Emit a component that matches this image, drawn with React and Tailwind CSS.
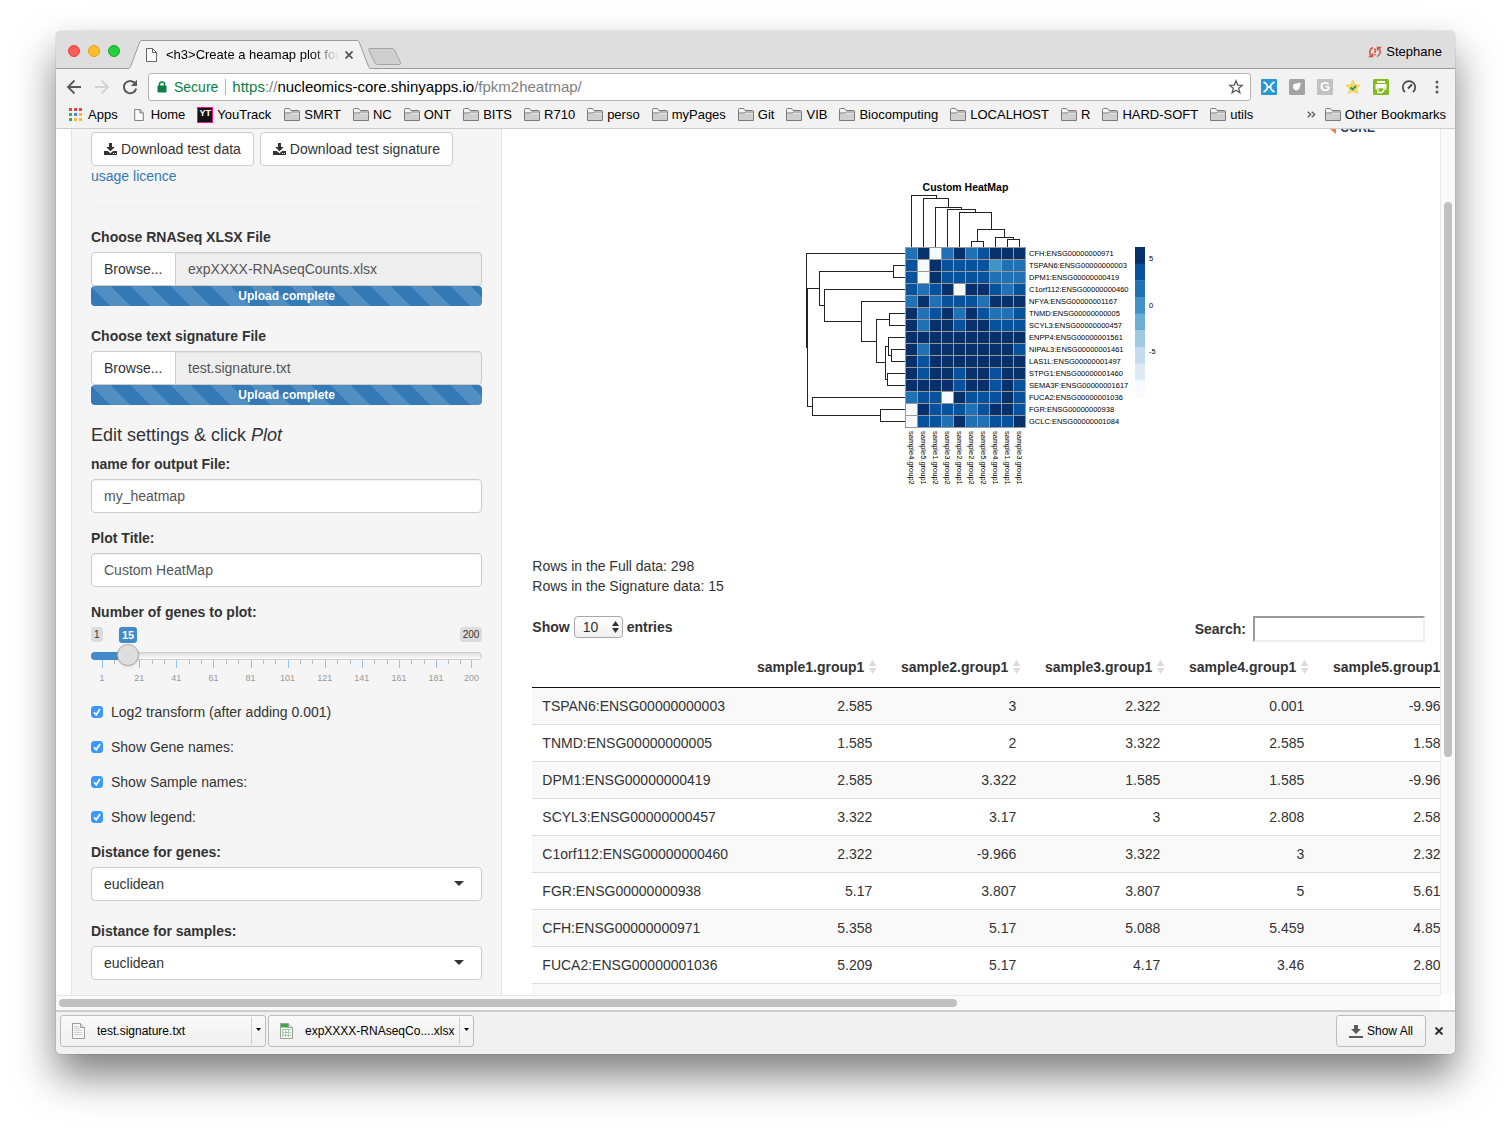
import React from "react";

const folders = ["SMRT", "NC", "ONT", "BITS", "R710", "perso", "myPages", "Git", "VIB", "Biocomputing", "LOCALHOST", "R", "HARD-SOFT", "utils"];

const columns = ["sample1.group1", "sample2.group1", "sample3.group1", "sample4.group1", "sample5.group1"];
const rows = [
  ["TSPAN6:ENSG00000000003", "2.585", "3", "2.322", "0.001", "-9.966"],
  ["TNMD:ENSG00000000005", "1.585", "2", "3.322", "2.585", "1.585"],
  ["DPM1:ENSG00000000419", "2.585", "3.322", "1.585", "1.585", "-9.966"],
  ["SCYL3:ENSG00000000457", "3.322", "3.17", "3", "2.808", "2.585"],
  ["C1orf112:ENSG00000000460", "2.322", "-9.966", "3.322", "3", "2.322"],
  ["FGR:ENSG00000000938", "5.17", "3.807", "3.807", "5", "5.615"],
  ["CFH:ENSG00000000971", "5.358", "5.17", "5.088", "5.459", "4.858"],
  ["FUCA2:ENSG00000001036", "5.209", "5.17", "4.17", "3.46", "2.807"],
  ["", "", "", "", "", ""],
];

const shades = { D: "#08306b", M: "#08519c", B: "#2171b5", L: "#4292c6", W: "#f7fbff" };
const heat = [
  ["CFH:ENSG00000000971", "BDWBDBMDDD"],
  ["TSPAN6:ENSG00000000003", "MWDMMMMLBB"],
  ["DPM1:ENSG00000000419", "MWDMMMMBBB"],
  ["C1orf112:ENSG00000000460", "MBMDWDDMBM"],
  ["NFYA:ENSG00000001167", "BDBMMMBDDD"],
  ["TNMD:ENSG00000000005", "DBMDBDMBBM"],
  ["SCYL3:ENSG00000000457", "DBDDMDDMMM"],
  ["ENPP4:ENSG00000001561", "DDDDDDDDDD"],
  ["NIPAL3:ENSG00000001461", "DBDDDDDDDM"],
  ["LAS1L:ENSG00000001497", "DMDDDDDDDD"],
  ["STPG1:ENSG00000001460", "DMDDMDDMDD"],
  ["SEMA3F:ENSG00000001617", "DDDDMDDMDM"],
  ["FUCA2:ENSG00000001036", "BMMWDMMMDM"],
  ["FGR:ENSG00000000938", "WDMMMBMDDM"],
  ["GCLC:ENSG00000001084", "WMMBDBBMMD"],
];
const samples = ["sample4.group2", "sample5.group1", "sample1.group2", "sample3.group2", "sample2.group1", "sample2.group2", "sample5.group2", "sample4.group1", "sample1.group1", "sample3.group1"];
const legend = ["#08306b", "#08519c", "#2171b5", "#4292c6", "#6baed6", "#9ecae1", "#c6dbef", "#deebf7", "#f7fbff"];

const columnTree =
  "M223 134V31H273V37M247 134V37H297V55M271 134V55H323V59M295 134V59H351V65M319 134V65H383V99M355 123V99H409V115M343 134V123H367V134M391 134V115H427V119M415 134V119H439V134";
const rowTree =
  "M212 147H13V335H15M39 217H15V453H25M187 183H39V251H49M212 171H187V195H212M212 219H49V283H123M212 243H123V323H153M179 279H153V365H171M212 267H179V291H212M177 333H171V399H175M212 315H177V351H183M212 339H183V363H212M212 387H175V411H212M212 435H25V471H161M212 459H161V483H212";

function HeatMap() {
  return (
    <svg viewBox="0 0 720 620" className="w-[360px] font-['Liberation_Sans',Arial,sans-serif]" role="img" aria-label="Custom HeatMap">
      <text x="331" y="22" fontSize="21" fontWeight="700" textAnchor="middle">Custom HeatMap</text>
      <g fill="none" stroke="#222" strokeWidth="2" shapeRendering="crispEdges">
        <path d={columnTree} />
        <path d={rowTree} />
      </g>
      <g stroke="#999" strokeWidth="2" shapeRendering="crispEdges">
        {heat.map(([name, cells], r) =>
          [...cells].map((c, i) => <rect key={name + i} x={211 + i * 24} y={135 + r * 24} width="24" height="24" fill={shades[c]} />)
        )}
      </g>
      <g fontSize="15" fill="#000">
        {heat.map(([name], r) => <text key={name} x="458" y={152 + r * 24}>{name}</text>)}
        {samples.map((s, i) => <text key={s} transform={`translate(${218 + i * 24} 502) rotate(90)`}>{s}</text>)}
        <text x="698" y="162">5</text>
        <text x="698" y="256">0</text>
        <text x="698" y="348">-5</text>
      </g>
      {legend.map((c, i) => <rect key={c} x="670" y={134 + (i * 100) / 3} width="20" height="34" fill={c} />)}
    </svg>
  );
}

function FolderIcon() {
  return (
    <svg width="16" height="13" viewBox="0 0 16 13" className="shrink-0" aria-hidden="true">
      <path d="M.5 12.5V1.500Q.5.5 1.500.5H5.500L7 2.500H14.500Q15.500 2.500 15.500 3.500V12.500Z" fill="#f4f4f4" stroke="#7a7a7a" />
      <path d="M1 12V5.500H15V12Z" fill="#cfcfcf" />
      <path d="M.5 5H6L7.500 4H15.500" fill="none" stroke="#7a7a7a" />
    </svg>
  );
}

function PageIcon({ className }) {
  return (
    <svg viewBox="0 0 11 14" className={className} fill="#fafafa" stroke="#666" aria-hidden="true">
      <path d="M.5.5H6.500L10.500 4.500V13.500H.5Z" />
      <path d="M6.500.5V4.500H10.500" fill="none" />
    </svg>
  );
}

function AppsIcon() {
  const colors = ["#e8453c", "#e8453c", "#e8453c", "#3aa757", "#4688f1", "#f9bb2d", "#3aa757", "#f9bb2d", "#f9bb2d"];
  return (
    <svg width="13" height="13" viewBox="0 0 13 13" aria-hidden="true">
      {colors.map((c, i) => <rect key={i} x={(i % 3) * 5} y={Math.floor(i / 3) * 5} width="3" height="3" fill={c} />)}
    </svg>
  );
}

function TabStrip() {
  return (
    <header className="flex h-[38px] shrink-0 items-end border-b border-[#9b9b9b] bg-[#dedede]">
      <div className="flex h-full w-[72px] items-center gap-2 pb-px pl-3 pt-1">
        <button aria-label="Close window" className="size-3 rounded-full border border-[#e2463f] bg-[#fc5b57]" />
        <button aria-label="Minimise window" className="size-3 rounded-full border border-[#e1a116] bg-[#fdbe2e]" />
        <button aria-label="Zoom window" className="size-3 rounded-full border border-[#12ac28] bg-[#28cc40]" />
      </div>
      <div className="-mb-px flex h-[29px] items-stretch">
        <svg width="14" height="29" viewBox="0 0 14 29" aria-hidden="true">
          <path d="M0 28.500C1.500 28.500 2 27.500 2.500 26.500L12 1.500Q12.400.5 14 .5V29H0Z" fill="#f2f2f2" />
          <path d="M0 28.500C1.500 28.500 2 27.500 2.500 26.500L12 1.500Q12.400.5 14 .5" fill="none" stroke="#9b9b9b" />
        </svg>
        <div className="flex w-[215px] items-center border-t border-[#9b9b9b] bg-[#f2f2f2] pl-1">
          <PageIcon className="mr-[9px] h-3.5 w-[11px] shrink-0" />
          <span className="w-[172px] overflow-hidden whitespace-nowrap text-[13px] mask-r-from-85%">&lt;h3&gt;Create a heamap plot for</span>
          <button aria-label="Close tab" className="ml-[7px]">
            <svg width="8" height="8" viewBox="0 0 8 8" stroke="#555" strokeWidth="1.800"><path d="M.5.5L7.500 7.500M7.500.5L.5 7.500" /></svg>
          </button>
        </div>
        <svg width="14" height="29" viewBox="0 0 14 29" aria-hidden="true">
          <path d="M14 28.500C12.500 28.500 12 27.500 11.500 26.500L2 1.500Q1.600.5 0 .5V29H14Z" fill="#f2f2f2" />
          <path d="M14 28.500C12.500 28.500 12 27.500 11.500 26.500L2 1.500Q1.600.5 0 .5" fill="none" stroke="#9b9b9b" />
        </svg>
      </div>
      <button aria-label="New tab" className="mb-[3px] -ml-[3px]">
        <svg width="34" height="17" viewBox="0 0 34 17"><path d="M1.500.5H24Q26 .5 26.800 2.500L32.500 14.500Q33.200 16.500 31.500 16.500H9.500Q7.500 16.500 6.700 14.500L.8 2Q.3.5 1.500.5Z" fill="#cfcfcf" stroke="#a3a3a3" /></svg>
      </button>
      <button className="mb-2 ml-auto mr-[13px] flex items-center gap-1 text-[13px] leading-4">
        <svg width="14" height="12" viewBox="0 0 14 12" fill="none" stroke="#cf5241" strokeWidth="1.500" aria-hidden="true">
          <path d="M5 1.500A5 5 0 0 0 3.500 10M.8 10.500H4.500V7.300M9 10.500A5 5 0 0 0 10.500 2M13.200 1.500H9.500V4.700" />
          <path d="M7 2.500V7M7 8V9.500" />
        </svg>
        Stephane
      </button>
    </header>
  );
}

function Toolbar() {
  return (
    <div className="flex shrink-0 items-center bg-[#f2f2f2] pb-[3px] pl-[10px] pt-1">
      <div className="flex w-[82px] shrink-0 items-center gap-3">
        <button aria-label="Back">
          <svg width="16" height="16" viewBox="0 0 16 16" fill="none" stroke="#5a5a5a" strokeWidth="1.800"><path d="M15 8H2M8.500 1.500L2 8L8.500 14.500" /></svg>
        </button>
        <button aria-label="Forward">
          <svg width="16" height="16" viewBox="0 0 16 16" fill="none" stroke="#d2d2d2" strokeWidth="1.800"><path d="M1 8H14M7.500 1.500L14 8L7.500 14.500" /></svg>
        </button>
        <button aria-label="Reload">
          <svg width="16" height="16" viewBox="0 0 16 16"><path d="M13 4.200A6.200 6.200 0 1 0 14.200 9.500" fill="none" stroke="#5a5a5a" strokeWidth="2" /><path d="M15 .8V7H8.800Z" fill="#5a5a5a" /></svg>
        </button>
      </div>
      <div className="flex h-7 min-w-0 flex-1 items-center rounded-[3px] border border-[#b4b4b4] bg-white pl-2 pr-[6px]">
        <svg width="10" height="12" viewBox="0 0 10 12" className="mr-[7px]" aria-hidden="true">
          <path d="M2.500 5V3.200A2.500 2.300 0 0 1 7.500 3.200V5" fill="none" stroke="#0b8043" strokeWidth="1.500" /><rect x=".5" y="4.500" width="9" height="7" rx=".8" fill="#0b8043" />
        </svg>
        <span className="mr-[6px] border-r border-[#b5b5b5] pr-[7px] text-[14px] leading-4 text-[#0b8043]">Secure</span>
        <div role="textbox" aria-label="Address" tabIndex={0} className="flex-1 whitespace-nowrap text-[15px] leading-5 text-black">
          <span className="text-[#0b8043]">https</span><span className="text-[#808080]">://</span>nucleomics-core.shinyapps.io<span className="text-[#808080]">/fpkm2heatmap/</span>
        </div>
        <button aria-label="Bookmark this page">
          <svg width="16" height="16" viewBox="0 0 16 16" fill="none" stroke="#5a5a5a" strokeWidth="1.300"><path d="M8 1.800L9.700 6.100L14.300 6.400L10.700 9.300L11.900 13.800L8 11.300L4.100 13.800L5.300 9.300L1.700 6.400L6.300 6.100Z" /></svg>
        </button>
      </div>
      <div className="flex shrink-0 items-center gap-3 pl-[10px] pr-[10px]">
        <button aria-label="Xmarks">
          <svg width="16" height="16" viewBox="0 0 16 16"><rect width="16" height="16" rx="1" fill="#2a97d4" /><path d="M2.500 3Q6.500 5 6.500 8Q6.500 11 2.500 13M13.500 3Q9.500 5 9.500 8Q9.500 11 13.500 13" fill="none" stroke="#fff" strokeWidth="1.800" /><path d="M6 8H10" stroke="#fff" strokeWidth="2" /></svg>
        </button>
        <button aria-label="Extension">
          <svg width="16" height="16" viewBox="0 0 16 16"><rect width="16" height="16" rx="1.500" fill="#a3a3a3" /><path d="M4 7Q4 4.500 7 4.500L11.500 3.500Q11.500 9 9 11Q7 12 5 10.500Q4 9 4 7Z" fill="#fff" /></svg>
        </button>
        <button aria-label="Google" className="size-4 rounded-[1px] bg-[#c2c2c2] text-center text-[13px] font-bold leading-4 text-white">G</button>
        <button aria-label="Starred">
          <svg width="16" height="16" viewBox="0 0 16 16"><path d="M8 1L10.200 5.700L15.300 6.300L11.500 9.800L12.600 14.800L8 12.300L3.400 14.800L4.500 9.800L.7 6.300L5.800 5.700Z" fill="#fdd85b" stroke="#f7c84a" strokeWidth=".6" /><path d="M5.500 8.500L7.500 10.500L11 7" fill="none" stroke="#219a5b" strokeWidth="1.800" /></svg>
        </button>
        <button aria-label="Print friendly">
          <svg width="16" height="16" viewBox="0 0 16 16"><rect width="16" height="16" rx="1.500" fill="#83b81f" /><path d="M4 2H12V4H4ZM2.500 5H13.500V10.500H12V8H4V10.500H2.500Z" fill="#fff" /><path d="M5 8.500H11V11L9 13.500H5Z" fill="#83b81f" stroke="#fff" strokeWidth="1.300" /></svg>
        </button>
        <button aria-label="Speed">
          <svg width="16" height="16" viewBox="0 0 16 16" fill="none" stroke="#484848" strokeWidth="1.700"><path d="M4 13A6.200 6.200 0 1 1 12 13" /><path d="M7 9.500L11 5.500" strokeWidth="2" /></svg>
        </button>
        <button aria-label="Menu">
          <svg width="16" height="16" viewBox="0 0 16 16" fill="#5a5a5a"><circle cx="8" cy="3" r="1.500" /><circle cx="8" cy="8" r="1.500" /><circle cx="8" cy="13" r="1.500" /></svg>
        </button>
      </div>
    </div>
  );
}

function Bookmarks() {
  const item = "flex shrink-0 items-center gap-1 text-black";
  return (
    <nav aria-label="Bookmarks" className="flex h-[25px] shrink-0 items-center whitespace-nowrap border-b border-[#cdcdcd] bg-[#f2f2f2] pb-[3px] pl-[13px] pr-[9px] text-[13px] leading-4">
      <a href="#apps" className={item}><AppsIcon /><span className="pl-[2px]">Apps</span></a>
      <a href="#home" className={item + " ml-4"}><PageIcon className="h-3 w-[10px]" /><span className="pl-[3px]">Home</span></a>
      <a href="#youtrack" className={item + " ml-3"}>
        <span className="size-4 border border-[#f0148c] bg-[#151515] text-center text-[9px] font-bold leading-[10px] text-white">YT</span>YouTrack
      </a>
      <div className="flex min-w-0 flex-1 gap-3 overflow-hidden pl-[13px]">
        {folders.map((f) => <a key={f} href={"#" + f} className={item}><FolderIcon />{f}</a>)}
      </div>
      <button aria-label="More bookmarks" className="mr-[9px]">
        <svg width="9" height="7" viewBox="0 0 9 7" fill="none" stroke="#5a5a5a" strokeWidth="1.300"><path d="M.7.7L3.700 3.500L.7 6.300M4.700.7L7.700 3.500L4.700 6.300" /></svg>
      </button>
      <a href="#other" className={item}><FolderIcon />Other Bookmarks</a>
    </nav>
  );
}

function DownloadIcon() {
  return (
    <svg width="13" height="12" viewBox="0 0 13 12" fill="#333" aria-hidden="true">
      <path d="M5 0H8V4H10.800L6.500 8.300L2.200 4H5Z" />
      <path d="M0 8H3.800L6.500 10.300L9.200 8H13V12H0Z" />
      <path d="M9 10h1v1h-1zM11 10h1v1h-1z" fill="#fff" />
    </svg>
  );
}

function FileField({ id, label, file }) {
  return (
    <div className="mb-5">
      <label htmlFor={id} className="mb-[5px] block font-bold">{label}</label>
      <div className="flex h-[34px]">
        <label className="flex w-[85px] shrink-0 items-center rounded-l border border-[#ccc] bg-white px-3">
          Browse...
          <input id={id} type="file" className="sr-only" />
        </label>
        <input readOnly aria-label={label + " name"} value={file} className="min-w-0 flex-1 rounded-r border border-l-0 border-[#ccc] bg-[#eee] px-3 text-[#555] inset-shadow-2xs" />
      </div>
      <div role="progressbar" aria-valuenow={100} aria-label={label} className="h-5 rounded bg-[#337ab7] bg-[linear-gradient(45deg,rgba(255,255,255,.15)_25%,transparent_25%,transparent_50%,rgba(255,255,255,.15)_50%,rgba(255,255,255,.15)_75%,transparent_75%,transparent)] bg-size-[40px_40px] text-center text-xs font-bold leading-5 text-white">
        Upload complete
      </div>
    </div>
  );
}

function TextField({ id, label, value }) {
  return (
    <div className="mb-[15px]">
      <label htmlFor={id} className="mb-[5px] block font-bold">{label}</label>
      <input id={id} defaultValue={value} className="h-[34px] w-full rounded border border-[#ccc] bg-white px-3 text-[#555] inset-shadow-2xs" />
    </div>
  );
}

function SelectField({ id, label }) {
  return (
    <div className="mb-5">
      <label htmlFor={id} className="mb-[5px] block font-bold">{label}</label>
      <div className="relative">
        <select id={id} className="h-[34px] w-full appearance-none rounded border border-[#ccc] bg-white px-3">
          <option>euclidean</option>
        </select>
        <svg width="10" height="5" viewBox="0 0 10 5" className="pointer-events-none absolute right-[18px] top-[14px]" aria-hidden="true"><path d="M0 0H10L5 5Z" fill="#333" /></svg>
      </div>
    </div>
  );
}

function CheckField({ label }) {
  return (
    <label className="flex items-center gap-2">
      <span className="relative flex size-3">
        <input type="checkbox" defaultChecked className="peer size-3 appearance-none rounded-[3px] border border-[#aaa] bg-white checked:border-[#3b99fc] checked:bg-[#3b99fc]" />
        <svg viewBox="0 0 12 12" className="pointer-events-none absolute inset-0 hidden peer-checked:block" fill="none" stroke="#fff" strokeWidth="1.700" aria-hidden="true"><path d="M3 6.300L5.200 8.800L9 3" /></svg>
      </span>
      {label}
    </label>
  );
}

const ticks = [1, 21, 41, 61, 81, 101, 121, 141, 161, 181];

function GeneSlider() {
  return (
    <div className="h-[75px]">
      <label htmlFor="genes" className="mb-[5px] block font-bold">Number of genes to plot:</label>
      <div className="relative flex items-center justify-between text-[10px] leading-[15px]">
        <span className="rounded-[3px] bg-[#dcdcdc] px-[3px]">1</span>
        <span className="absolute left-7 top-0 rounded-[3px] bg-[#428bca] px-[3px] text-[11px] font-bold leading-4 text-white">15</span>
        <span className="rounded-[3px] bg-[#dcdcdc] px-[3px]">200</span>
      </div>
      <div className="relative mt-[10px] h-2 rounded-full border border-[#ccc] bg-linear-to-b from-[#dedede] to-white">
        <div className="-my-px -ml-px h-2 w-[36px] rounded-l-full bg-[#428bca]" />
        <input
          id="genes" type="range" min="1" max="200" defaultValue="15"
          className="absolute -left-px -top-[9px] h-[22px] w-[calc(100%+2px)] appearance-none bg-transparent [&::-webkit-slider-thumb]:size-[22px] [&::-webkit-slider-thumb]:appearance-none [&::-webkit-slider-thumb]:rounded-full [&::-webkit-slider-thumb]:border [&::-webkit-slider-thumb]:border-[#aaa] [&::-webkit-slider-thumb]:bg-[#dedede] [&::-webkit-slider-thumb]:shadow"
        />
      </div>
      <div className="flex px-[11px] text-[9px] leading-[10px] text-[#999]" aria-hidden="true">
        {ticks.map((t) => (
          <div key={t} className="min-w-0" style={{ flex: t === 181 ? 19 : 20 }}>
            <div className="flex h-2 *:flex-1 *:border-l">
              <i className="h-2 border-[#9cc0e0]" />
              <i className="h-1 border-[#bbb]" />
              <i className="h-1 border-[#bbb]" />
            </div>
            <div className="mt-[5px] flex w-0 justify-center"><span>{t}</span></div>
          </div>
        ))}
        <div className="w-0">
          <div className="h-2 w-px bg-[#9cc0e0]" />
          <div className="mt-[5px] flex w-0 justify-center"><span>200</span></div>
        </div>
      </div>
    </div>
  );
}

function Sidebar() {
  const button = "flex h-[34px] items-center gap-1 rounded border border-[#ccc] bg-white px-3";
  return (
    <aside className="w-1/3 shrink-0 px-[15px]">
      <form className="h-full border-x border-[#e3e3e3] bg-[#f5f5f5] px-[19px] pt-[3px]">
        <div className="flex gap-[6px] whitespace-nowrap">
          <button type="button" className={button}><DownloadIcon />Download test data</button>
          <button type="button" className={button}><DownloadIcon />Download test signature</button>
        </div>
        <a href="#licence" className="text-[#337ab7]">usage licence</a>
        <hr className="my-5 border-[#eee]" />
        <FileField id="xlsx" label="Choose RNASeq XLSX File" file="expXXXX-RNAseqCounts.xlsx" />
        <FileField id="signature" label="Choose text signature File" file="test.signature.txt" />
        <h4 className="mb-[9px] text-lg leading-5">Edit settings &amp; click <em>Plot</em></h4>
        <TextField id="outfile" label="name for output File:" value="my_heatmap" />
        <TextField id="title" label="Plot Title:" value="Custom HeatMap" />
        <GeneSlider />
        <div className="mb-[15px] mt-[25px] flex flex-col gap-[15px]">
          <CheckField label="Log2 transform (after adding 0.001)" />
          <CheckField label="Show Gene names:" />
          <CheckField label="Show Sample names:" />
          <CheckField label="Show legend:" />
        </div>
        <SelectField id="dist-genes" label="Distance for genes:" />
        <SelectField id="dist-samples" label="Distance for samples:" />
      </form>
    </aside>
  );
}

function DataTable() {
  return (
    <table className="mt-[5px] w-[926px] table-fixed border-separate border-spacing-0">
      <thead>
        <tr>
          <th className="w-[206px] border-b border-[#111]"><span className="sr-only">Gene</span></th>
          {columns.map((c) => (
            <th key={c} className="h-[41px] w-36 border-b border-[#111] p-0">
              <button className="flex w-full items-center justify-end gap-1 pr-[5px] font-bold">
                {c}
                <svg width="9" height="14" viewBox="0 0 9 14" fill="#dcdcdc" aria-hidden="true"><path d="M4.500 0L8.500 6H.5ZM4.500 14L8.500 8H.5Z" /></svg>
              </button>
            </th>
          ))}
        </tr>
      </thead>
      <tbody className="[&>tr:not(:first-child)>td]:border-t [&>tr:nth-child(odd)]:bg-[#f9f9f9]">
        {rows.map((r, i) => (
          <tr key={i} className={i ? "h-[37px]" : "h-9"}>
            {r.map((v, j) => (
              <td key={j} className={"border-[#ddd] px-[10px] py-0 " + (j ? "text-right" : "text-left")}>{v}</td>
            ))}
          </tr>
        ))}
      </tbody>
    </table>
  );
}

function MainPanel() {
  return (
    <main className="w-2/3 shrink-0 px-[15px]">
      <div className="flex h-[6px] items-end justify-end gap-1 overflow-hidden pr-[50px] text-xs font-bold leading-[14px] text-[#2c3e5c]">
        <svg width="6" height="6" viewBox="0 0 6 6" aria-hidden="true"><path d="M0 0H6V5Z" fill="#f47a3c" /></svg>
        <span>CORE</span>
      </div>
      <div className="mt-[45px] flex justify-center pl-[2px]"><HeatMap /></div>
      <p className="mt-[66px]">Rows in the Full data: 298</p>
      <p>Rows in the Signature data: 15</p>
      <div className="mt-5 flex items-start justify-between font-bold">
        <label className="flex items-center gap-1">
          Show
          <span className="relative">
            <select className="block h-[22px] w-[49px] appearance-none rounded border border-[#a8a8a8] bg-linear-to-b from-white to-[#f0f0f0] px-2 font-normal">
              <option>10</option>
            </select>
            <svg width="7" height="12" viewBox="0 0 7 12" className="pointer-events-none absolute right-1 top-[5px]" fill="#333" aria-hidden="true"><path d="M3.500 0L7 5H0ZM3.500 12L7 7H0Z" /></svg>
          </span>
          entries
        </label>
        <label className="flex items-center gap-[7px]">
          Search:
          <input type="search" className="h-[26px] w-[172px] border-2 border-b-[#eee] border-l-[#9a9a9a] border-r-[#eee] border-t-[#9a9a9a] bg-white px-1 font-normal" />
        </label>
      </div>
      <DataTable />
    </main>
  );
}

function FileIcon({ sheet }) {
  return (
    <svg width="13" height="16" viewBox="0 0 13 16" aria-hidden="true">
      <path d="M.5.5H8.500L12.500 4.500V15.500H.5Z" fill="#f8f8f8" stroke="#9d9d9d" />
      {sheet ? (
        <>
          <path d="M1 1H8.500V4.500H1Z" fill="#3fa64a" />
          <path d="M2 6.500H11M2 9.500H11M2 12.500H11M2.500 6V14M5.500 6V14M8.500 6V14" stroke="#a6cda9" fill="none" />
        </>
      ) : (
        <path d="M2 3.500H7M2 5.500H8M2 7.500H10M2 9.500H10M2 11.500H10" stroke="#d0d0d0" fill="none" />
      )}
      <path d="M8.500.5V4.500H12.500" fill="#e4e4e4" stroke="#9d9d9d" />
    </svg>
  );
}

function DownloadItem({ name, sheet }) {
  return (
    <div className="flex h-8 w-[206px] rounded-[3px] border border-[#bdbdbd] bg-linear-to-b from-[#fafafa] to-[#f0f0f0]">
      <button className="flex flex-1 items-center gap-3 whitespace-nowrap pl-[11px]"><FileIcon sheet={sheet} />{name}</button>
      <button aria-label={"Options for " + name} className="my-px flex w-[14px] items-center justify-center border-l border-[#cfcfcf] pb-1">
        <svg width="5" height="3" viewBox="0 0 5 3"><path d="M0 0H5L2.500 3Z" /></svg>
      </button>
    </div>
  );
}

function Shelf() {
  return (
    <footer className="flex h-11 shrink-0 items-center border-t-2 border-[#cdcdcd] bg-[#f1f1f1] pb-1 pl-1 pr-3 text-xs text-black">
      <div className="flex gap-[2px]">
        <DownloadItem name="test.signature.txt" />
        <DownloadItem name="expXXXX-RNAseqCo....xlsx" sheet />
      </div>
      <button className="ml-auto flex h-8 items-center gap-1 rounded-[3px] border border-[#bdbdbd] bg-linear-to-b from-[#fafafa] to-[#f0f0f0] px-3">
        <svg width="14" height="13" viewBox="0 0 14 13" fill="#5a5a5a" aria-hidden="true"><path d="M5 0H9V4H12L7 9L2 4H5ZM0 11H14V13H0Z" /></svg>
        Show All
      </button>
      <button aria-label="Close downloads bar" className="ml-[9px]">
        <svg width="8" height="8" viewBox="0 0 8 8" stroke="#222" strokeWidth="1.800"><path d="M.5.5L7.500 7.500M7.500.5L.5 7.500" /></svg>
      </button>
    </footer>
  );
}

export default function App() {
  return (
    <div className="flex h-screen flex-col bg-white px-14 pb-20 pt-[31px] font-['Liberation_Sans',Arial,sans-serif]">
      <div className="flex min-h-0 flex-1 flex-col overflow-hidden rounded-[5px] bg-white shadow-[0_22px_40px_rgba(0,0,0,.5),0_0_1px_rgba(0,0,0,.6)]">
        <TabStrip />
        <Toolbar />
        <Bookmarks />
        <div className="grid min-h-0 flex-1 grid-cols-[minmax(0,1fr)_15px] grid-rows-[minmax(0,1fr)_15px]">
          <div className="flex overflow-hidden text-sm leading-5 text-[#333]">
            <Sidebar />
            <MainPanel />
          </div>
          <div className="flex justify-center border-l border-[#e8e8e8] bg-[#fafafa] pt-[73px]">
            <div className="h-[70%] w-2 rounded-full bg-[#c1c1c1]" />
          </div>
          <div className="flex items-center border-t border-[#e8e8e8] bg-[#fafafa] pl-[3px]">
            <div className="h-2 w-[65%] rounded-full bg-[#c1c1c1]" />
          </div>
        </div>
        <Shelf />
      </div>
    </div>
  );
}
